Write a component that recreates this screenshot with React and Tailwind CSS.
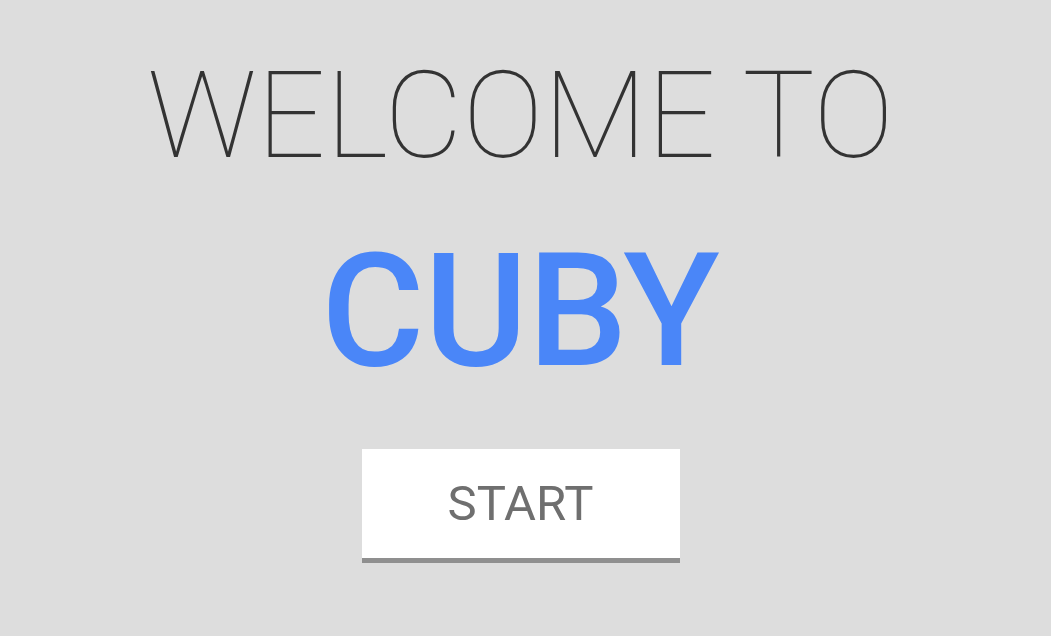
import React from "react";

const App = () => {
  return (
    <div className="w-[1051px] h-[636px] bg-[#dddddd] overflow-hidden font-['Roboto',sans-serif]">
      <div className="flex flex-col items-center pt-[56px] pr-[10px]">
        {/* heading */}
        <h1 className="text-[121px] leading-none font-thin text-[#333333]">
          WELCOME TO
        </h1>
        <h2 className="mt-[55px] text-[158px] leading-none font-medium text-[#4a86f8]">
          CUBY
        </h2>

        {/* start button */}
        <button className="mt-[59px] w-[318px] h-[114px] bg-white border-b-[5px] border-[#8f8f8f] flex items-center justify-center">
          <span className="text-[49px] leading-none text-[#6f6f6f]">START</span>
        </button>
      </div>
    </div>
  );
};

export default App;
